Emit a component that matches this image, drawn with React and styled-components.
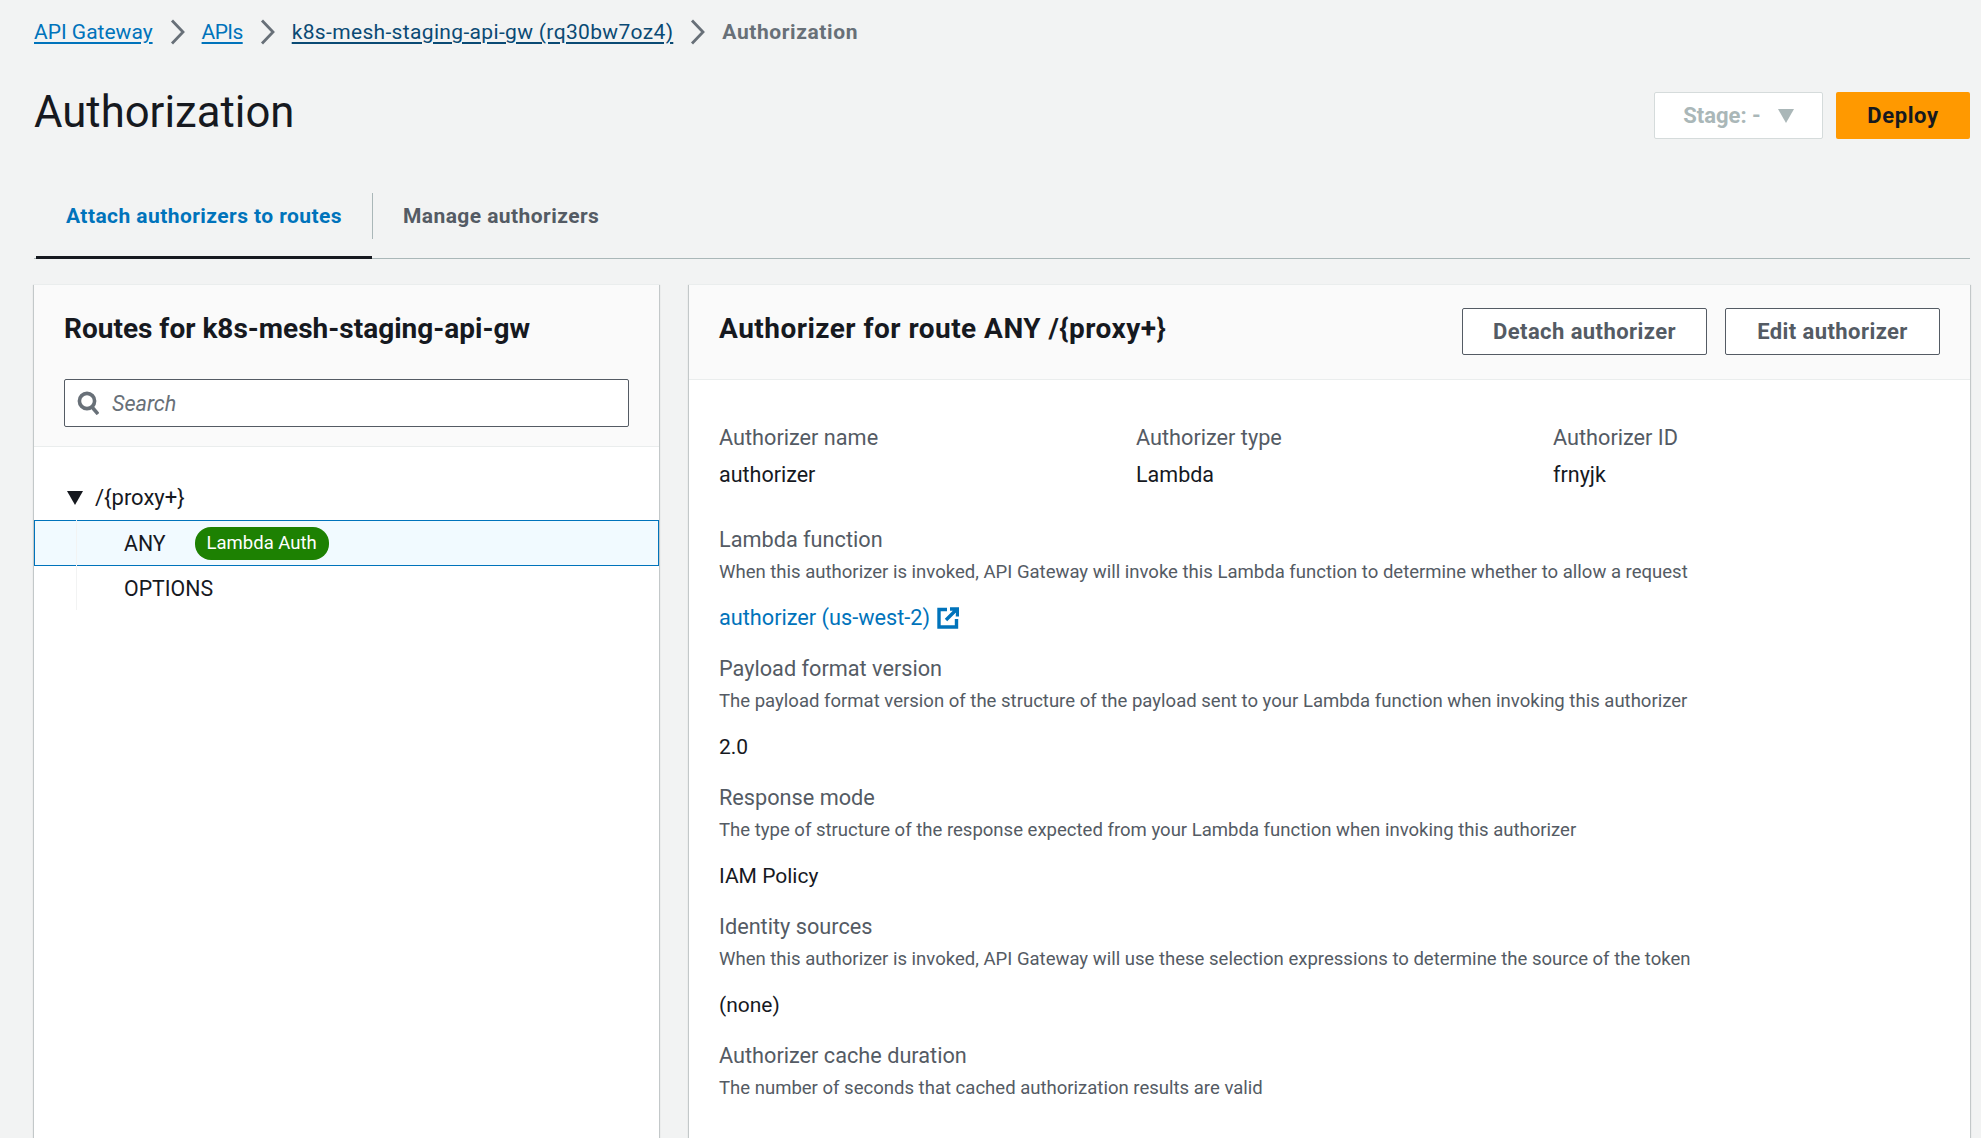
import React from 'react'
import styled, { createGlobalStyle } from 'styled-components'

const GlobalStyle = createGlobalStyle`
  html, body {
    margin: 0;
    padding: 0;
    height: 100%;
    background: #f2f3f3;
    overflow: hidden;
  }
  body {
    font-family: Roboto, "Liberation Sans", sans-serif;
    color: #16191f;
  }
  * { box-sizing: border-box; }
`

const Page = styled.div`
  height: 1138px;
  overflow: hidden;
  padding: 0 11px 0 34px;
`

const Breadcrumbs = styled.nav`
  height: 64px;
  display: flex;
  align-items: center;
  font-size: 21px;
`

const Crumb = styled.a`
  color: ${(p) => (p.$visited ? '#0a4a74' : '#0073bb')};
  letter-spacing: ${(p) => p.$spacing || '0'};
  text-decoration: underline;
  text-underline-offset: 3px;
`

const CrumbCurrent = styled.span`
  color: #687078;
  font-weight: 700;
  letter-spacing: 0.6px;
`

const Chevron = styled.svg`
  width: 16px;
  height: 26px;
  margin: 0 16px 0 17px;
  fill: none;
  stroke: #687078;
  stroke-width: 2.8;
`

const TitleRow = styled.header`
  height: 93px;
  display: flex;
  align-items: center;
  justify-content: space-between;
`

const Title = styled.h1`
  margin: 3px 0 0;
  font-size: 43.7px;
  line-height: 56px;
  font-weight: 400;
`

const Actions = styled.div`
  display: flex;
  gap: 13px;
  margin-top: 10px;
`

const StageButton = styled.button`
  width: 169px;
  height: 47px;
  display: flex;
  align-items: center;
  justify-content: center;
  gap: 17px;
  background: #fff;
  border: 1px solid #d5dbdb;
  border-radius: 2px;
  color: #aab7b8;
  font: 700 22px Roboto, sans-serif;
`

const Caret = styled.svg`
  width: 16px;
  height: 14px;
  fill: ${(p) => p.$color};
`

const PrimaryButton = styled.button`
  width: 134px;
  height: 47px;
  background: #ff9900;
  border: none;
  border-radius: 2px;
  color: #16191f;
  font: 700 22px Roboto, sans-serif;
  letter-spacing: 0.6px;
`

const Tabs = styled.div`
  height: 102px;
  padding-top: 36px;
  display: flex;
  align-items: flex-start;
  border-bottom: 1px solid #aab7b8;
`

const Tab = styled.div`
  height: 65px;
  padding: 8px 30px 0;
  font-size: 21px;
  line-height: 30px;
  font-weight: 700;
  letter-spacing: 0.43px;
  color: ${(p) => (p.$active ? '#0073bb' : '#545b64')};
  ${(p) => p.$active && `
    margin-left: 2px;
    box-shadow: 0 1px 0 #16191f, inset 0 -2px 0 #16191f;
  `}
`

const TabDivider = styled.div`
  width: 1px;
  height: 46px;
  background: #aab7b8;
`

const Columns = styled.div`
  display: grid;
  grid-template-columns: 625px 1fr;
  gap: 30px;
  margin-top: 25px;
`

const Panel = styled.section`
  height: 900px;
  background: #fff;
  border-top: 1px solid #eaeded;
  box-shadow: 0 1px 1px 0 rgba(0, 28, 36, 0.3), 1px 1px 1px 0 rgba(0, 28, 36, 0.15), -1px 1px 1px 0 rgba(0, 28, 36, 0.15);
`

const LeftHeader = styled.div`
  height: 162px;
  padding: 22px 30px 0;
  background: #fafafa;
  border-bottom: 1px solid #eaeded;
`

const PanelTitle = styled.h2`
  margin: ${(p) => (p.$wide ? '-1px 0 0' : '0')};
  font-size: 28px;
  line-height: 44px;
  font-weight: 700;
  letter-spacing: ${(p) => (p.$wide ? '0.47px' : '0')};
`

const SearchBox = styled.div`
  margin-top: 28px;
  height: 48px;
  display: flex;
  align-items: center;
  gap: 13px;
  padding: 0 12px;
  background: #fff;
  border: 1px solid #545b64;
  border-radius: 2px;
  color: #687078;
  font-size: 21.6px;
  font-style: italic;
`

const SearchIcon = styled.svg`
  width: 22px;
  height: 24px;
  fill: none;
  stroke: #687078;
  stroke-width: 3.6;
`

const Tree = styled.div`
  padding-top: 28px;
  font-size: 21.3px;
`

const TreeRoot = styled.div`
  height: 45px;
  display: flex;
  align-items: center;
  gap: 12px;
  padding-left: 33px;
  font-size: 22px;
`

const TreeChildren = styled.div`
  position: relative;
  &::before {
    content: '';
    position: absolute;
    left: 42px;
    top: 0;
    bottom: 0;
    width: 1px;
    background: #f2f3f3;
  }
`

const RouteRow = styled.div`
  height: ${(p) => (p.$selected ? 46 : 44)}px;
  display: flex;
  align-items: center;
  padding-left: ${(p) => (p.$selected ? 89 : 90)}px;
  background: ${(p) => (p.$selected ? '#f1faff' : 'transparent')};
  border: ${(p) => (p.$selected ? '1px solid #0073bb' : 'none')};
`

const Badge = styled.span`
  margin-left: 29px;
  height: 33px;
  display: inline-flex;
  align-items: center;
  padding: 0 12px;
  border-radius: 16px;
  background: #1d8102;
  color: #fff;
  font-size: 18.5px;
`

const RightHeader = styled.div`
  height: 95px;
  padding: 23px 30px 0;
  display: flex;
  justify-content: space-between;
  align-items: flex-start;
  background: #fafafa;
  border-bottom: 1px solid #eaeded;
`

const RightHeaderActions = styled.div`
  display: flex;
  gap: 18px;
`

const NormalButton = styled.button`
  height: 47px;
  width: ${(p) => p.$w}px;
  background: #fff;
  border: 1px solid #545b64;
  border-radius: 2px;
  color: #545b64;
  font: 700 22px Roboto, sans-serif;
  letter-spacing: 0.42px;
`

const PanelBody = styled.div`
  padding: 40px 30px 0;
`

const SummaryGrid = styled.div`
  display: grid;
  grid-template-columns: 417px 417px 1fr;
  margin-bottom: 29px;
`

const FieldLabel = styled.div`
  font-size: 21.7px;
  line-height: 36px;
  color: #545b64;
`

const FieldValue = styled.div`
  font-size: 21.5px;
  line-height: 37px;
`

const Field = styled.div`
  height: 129px;
`

const FieldHelp = styled.div`
  font-size: 18.55px;
  line-height: 28px;
  color: #545b64;
`

const ValueLine = styled.div`
  margin-top: 16px;
  font-size: 21px;
  line-height: 32px;
`

const ExternalLink = styled.a`
  display: inline-flex;
  align-items: center;
  gap: 7px;
  color: #0073bb;
  font-size: 21.7px;
`

const ExternalIcon = styled.svg`
  width: 22px;
  height: 22px;
  fill: none;
  stroke: #0073bb;
  stroke-width: 3.4;
`

const Sep = () => (
  <Chevron viewBox="0 0 16 26">
    <path d="M2 1.5l11 11.5L2 24.5" />
  </Chevron>
)

const summary = [
  { label: 'Authorizer name', value: 'authorizer' },
  { label: 'Authorizer type', value: 'Lambda' },
  { label: 'Authorizer ID', value: 'frnyjk' },
]

const fields = [
  {
    label: 'Lambda function',
    help: 'When this authorizer is invoked, API Gateway will invoke this Lambda function to determine whether to allow a request',
    link: 'authorizer (us-west-2)',
  },
  {
    label: 'Payload format version',
    help: 'The payload format version of the structure of the payload sent to your Lambda function when invoking this authorizer',
    value: '2.0',
  },
  {
    label: 'Response mode',
    help: 'The type of structure of the response expected from your Lambda function when invoking this authorizer',
    value: 'IAM Policy',
  },
  {
    label: 'Identity sources',
    help: 'When this authorizer is invoked, API Gateway will use these selection expressions to determine the source of the token',
    value: '(none)',
  },
  {
    label: 'Authorizer cache duration',
    help: 'The number of seconds that cached authorization results are valid',
  },
]

const App = () => {
  return (
    <>
      <GlobalStyle />
      <Page>
        <Breadcrumbs>
          <Crumb>API Gateway</Crumb>
          <Sep />
          <Crumb $spacing="-0.6px">APIs</Crumb>
          <Sep />
          <Crumb $visited $spacing="0.34px">k8s-mesh-staging-api-gw (rq30bw7oz4)</Crumb>
          <Sep />
          <CrumbCurrent>Authorization</CrumbCurrent>
        </Breadcrumbs>

        <TitleRow>
          <Title>Authorization</Title>
          <Actions>
            <StageButton>
              Stage: -
              <Caret $color="#aab7b8" viewBox="0 0 16 14"><path d="M0 0h16L8 14z" /></Caret>
            </StageButton>
            <PrimaryButton>Deploy</PrimaryButton>
          </Actions>
        </TitleRow>

        <Tabs>
          <Tab $active>Attach authorizers to routes</Tab>
          <TabDivider />
          <Tab>Manage authorizers</Tab>
        </Tabs>

        <Columns>
          <Panel>
            <LeftHeader>
              <PanelTitle>Routes for k8s-mesh-staging-api-gw</PanelTitle>
              <SearchBox>
                <SearchIcon viewBox="0 0 22 24">
                  <circle cx="10" cy="10" r="7.6" />
                  <path d="M15 16l6 7" />
                </SearchIcon>
                Search
              </SearchBox>
            </LeftHeader>
            <Tree>
              <TreeRoot>
                <Caret $color="#16191f" viewBox="0 0 16 14"><path d="M0 0h16L8 14z" /></Caret>
                /{'{proxy+}'}
              </TreeRoot>
              <TreeChildren>
                <RouteRow $selected>
                  ANY
                  <Badge>Lambda Auth</Badge>
                </RouteRow>
                <RouteRow>OPTIONS</RouteRow>
              </TreeChildren>
            </Tree>
          </Panel>

          <Panel>
            <RightHeader>
              <PanelTitle $wide>Authorizer for route ANY /{'{proxy+}'}</PanelTitle>
              <RightHeaderActions>
                <NormalButton $w={245}>Detach authorizer</NormalButton>
                <NormalButton $w={215}>Edit authorizer</NormalButton>
              </RightHeaderActions>
            </RightHeader>
            <PanelBody>
              <SummaryGrid>
                {summary.map(({ label, value }) => (
                  <div key={label}>
                    <FieldLabel>{label}</FieldLabel>
                    <FieldValue>{value}</FieldValue>
                  </div>
                ))}
              </SummaryGrid>
              {fields.map(({ label, help, value, link }) => (
                <Field key={label}>
                  <FieldLabel>{label}</FieldLabel>
                  <FieldHelp>{help}</FieldHelp>
                  {value && <ValueLine>{value}</ValueLine>}
                  {link && (
                    <ValueLine>
                      <ExternalLink>
                        {link}
                        <ExternalIcon viewBox="0 0 22 22">
                          <path d="M10 2.5H2V20h17.5v-8" />
                          <path d="M13 2h7.5v7.5M20 2L9 13" />
                        </ExternalIcon>
                      </ExternalLink>
                    </ValueLine>
                  )}
                </Field>
              ))}
            </PanelBody>
          </Panel>
        </Columns>
      </Page>
    </>
  )
}

export default App
